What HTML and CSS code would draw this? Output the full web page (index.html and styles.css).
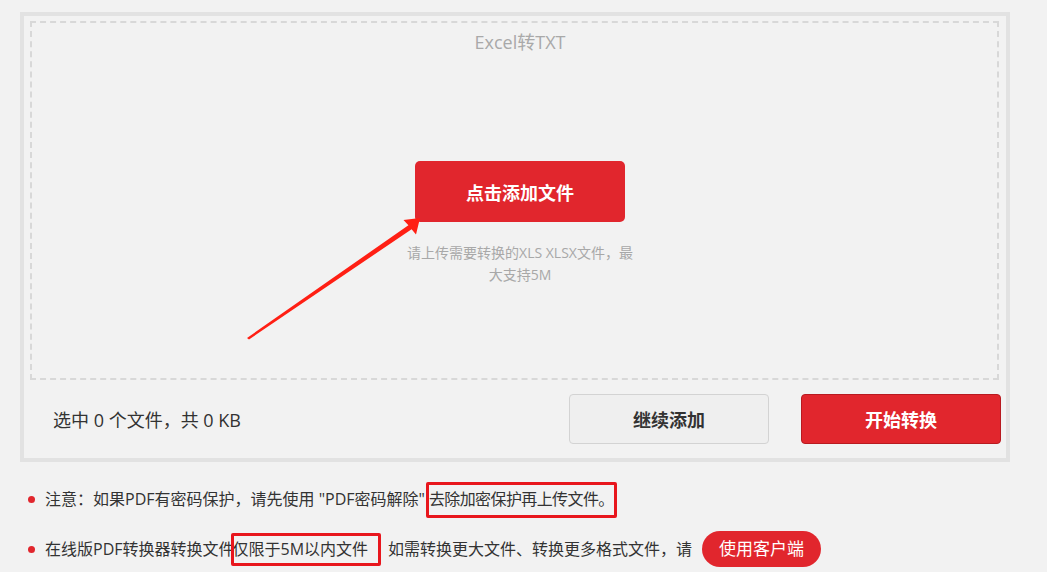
FILE: index.html
```html
<!DOCTYPE html>
<html lang="zh-CN">
<head>
<meta charset="utf-8">
<title>Excel转TXT</title>
<link rel="stylesheet" href="styles.css">
</head>
<body>
<div class="page">
  <div class="panel">
    <div class="drop">
      <div class="title">Excel转TXT</div>
      <button class="add-btn">点击添加文件</button>
      <div class="hint">请上传需要转换的XLS XLSX文件，最<br>大支持5M</div>
      <svg class="arrow" width="190" height="140" viewBox="0 0 190 140">
        <polygon points="7,133 168.4,20.2 163.5,15 180,13 176,29.5 171.6,24.2 9,134.5" fill="#ff1f14"/>
      </svg>
    </div>
    <div class="bar">
      <div class="status">选中 0 个文件，共 0 KB</div>
      <div class="actions">
        <button class="btn btn-gray">继续添加</button>
        <button class="btn btn-red">开始转换</button>
      </div>
    </div>
  </div>
  <ul class="notes">
    <li><span class="txt">注意：如果PDF有密码保护，请先使用 "PDF密码解除"</span><span class="mark mark-1">去除加密保护再上传文件。</span></li>
    <li><span class="txt">在线版PDF转换器转换文件</span><span class="mark mark-2">仅限于5M以内文件</span><span class="txt after-mark">如需转换更大文件、转换更多格式文件，请</span><a class="pill">使用客户端</a></li>
  </ul>
</div>
</body>
</html>
```

FILE: styles.css
```css
html, body {
  margin: 0;
  padding: 0;
  background: #f2f2f2;
}
body {
  font-family: "Open Sans", "Noto Sans CJK SC", sans-serif;
  color: #333;
}
.page {
  padding: 12px 0 0 20px;
}
.panel {
  box-sizing: border-box;
  width: 990px;
  height: 450px;
  border: 4px solid #e2e2e2;
  background: #f2f2f2;
  padding: 5px 0 0 6px;
}
.drop {
  position: relative;
  box-sizing: border-box;
  height: 359px;
  margin-right: 7px;
  border: 2px dashed #d8d8d8;
  padding: 7px 0 0 11px;
  display: flex;
  flex-direction: column;
  align-items: center;
}
.title {
  font-size: 18px;
  line-height: 24px;
  color: #a9a9a9;
}
.add-btn {
  margin-top: 107px;
  width: 210px;
  height: 61px;
  border: none;
  border-radius: 5px;
  background: #e1262d;
  color: #fff;
  font-family: inherit;
  font-size: 18px;
  font-weight: bold;
  padding: 0;
}
.hint {
  margin-top: 20px;
  font-size: 14px;
  line-height: 22px;
  color: #a8a8a8;
  text-align: center;
}
.arrow {
  position: absolute;
  left: 208px;
  top: 182px;
}
.bar {
  height: 78px;
  display: flex;
  align-items: center;
  justify-content: space-between;
  padding: 0 5px 0 23px;
}
.status {
  font-size: 18px;
  color: #333;
}
.actions {
  display: flex;
  gap: 32px;
}
.btn {
  box-sizing: border-box;
  width: 200px;
  height: 50px;
  border-radius: 4px;
  font-family: inherit;
  font-size: 18px;
  font-weight: bold;
  padding: 0;
}
.btn-gray {
  background: #efefef;
  border: 1px solid #d3d3d3;
  color: #333;
}
.btn-red {
  background: #e1262d;
  border: 1px solid #b81a20;
  color: #fff;
}
.notes {
  list-style: none;
  margin: 19px 0 0 0;
  padding: 0 0 0 8px;
}
.notes li {
  display: flex;
  align-items: center;
  height: 36px;
  font-size: 16px;
  color: #333;
  margin-bottom: 14px;
  white-space: pre;
}
.notes li::before {
  content: "";
  width: 7px;
  height: 7px;
  border-radius: 50%;
  background: #e1262d;
  margin-right: 10px;
  flex: none;
}
.txt {
  line-height: 24px;
}
.after-mark {
  margin-left: 10px;
}
.mark {
  position: relative;
  line-height: 24px;
}
.mark::after {
  content: "";
  position: absolute;
  border: 3px solid #e8161d;
  border-radius: 2px;
}
.mark-1 {
  margin-left: 4px;
  letter-spacing: -0.6px;
}
.mark-1::after {
  left: -3px;
  width: 191px;
  top: -5px;
  bottom: -7px;
  box-sizing: border-box;
}
.mark-2 {
  margin-left: -2px;
  padding-right: 10px;
}
.mark-2::after {
  left: -2px;
  right: -3px;
  top: -4px;
  bottom: -5px;
}
.pill {
  display: inline-block;
  margin-left: 10px;
  height: 36px;
  line-height: 36px;
  padding: 0 17px;
  border-radius: 18px;
  background: #e1262d;
  color: #fff;
  font-size: 17px;
}
```
